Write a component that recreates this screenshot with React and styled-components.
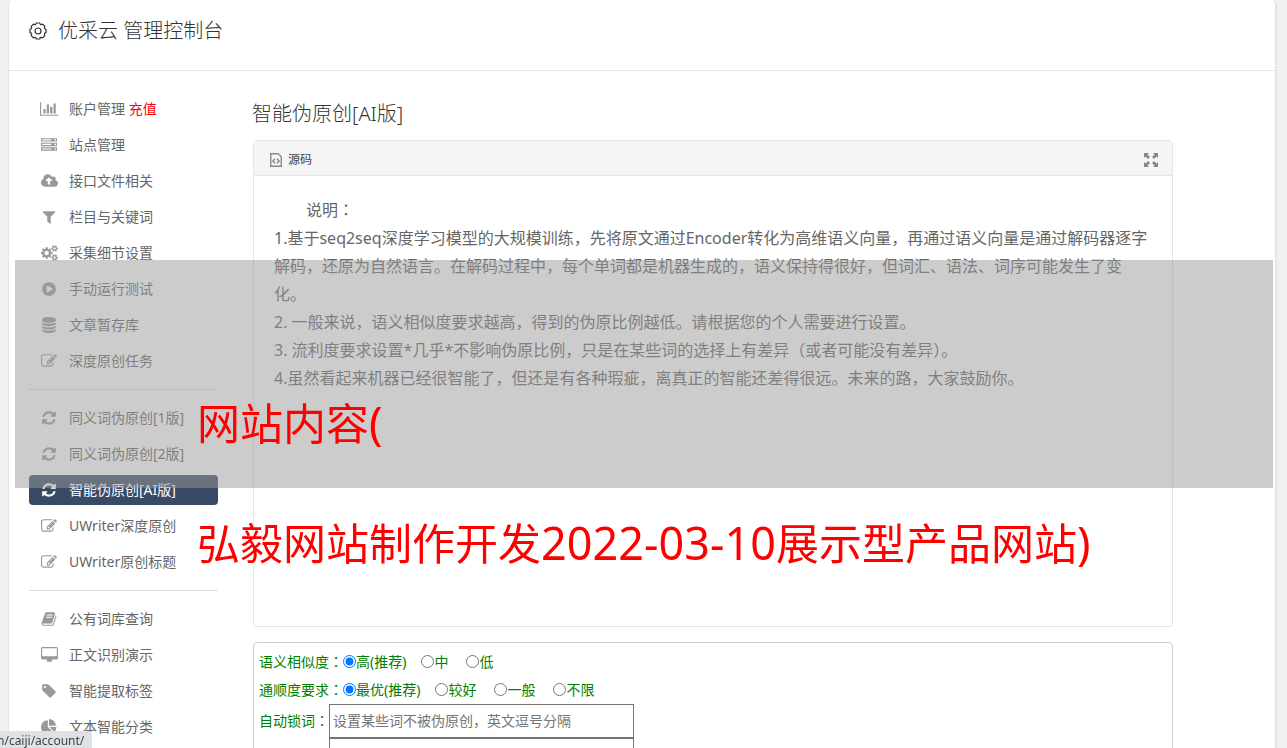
import { useState } from "react";
import styled, { createGlobalStyle, css } from "styled-components";

const icons = {
  chart: {
    width: 2048,
    path: "M640 896v512h-256v-512h256zm384-512v1024h-256v-1024h256zm1024 1152v128h-2048v-1536h128v1408h1920zm-640-896v768h-256v-768h256zm384-384v1152h-256v-1152h256z",
  },
  server: {
    width: 1792,
    path: "M128 1408h1024v-128h-1024v128zm0-512h1024v-128h-1024v128zm1568 448q0-40-28-68t-68-28-68 28-28 68 28 68 68 28 68-28 28-68zm-1568-960h1024v-128h-1024v128zm1568 448q0-40-28-68t-68-28-68 28-28 68 28 68 68 28 68-28 28-68zm0-512q0-40-28-68t-68-28-68 28-28 68 28 68 68 28 68-28 28-68zm96 832v384h-1792v-384h1792zm0-512v384h-1792v-384h1792zm0-512v384h-1792v-384h1792z",
  },
  cloud: {
    width: 1920,
    path: "M1280 864q0-14-9-23l-352-352q-9-9-23-9t-23 9l-351 351q-10 12-10 24 0 14 9 23t23 9h224v352q0 13 9.5 22.5t22.5 9.5h192q13 0 22.5-9.5t9.5-22.5v-352h224q13 0 22.5-9.5t9.5-22.5zm640 288q0 159-112.5 271.5t-271.5 112.5h-1088q-185 0-316.5-131.5t-131.5-316.5q0-130 70-240t188-165q-2-30-2-43 0-212 150-362t362-150q156 0 285.5 87t188.5 231q71-62 166-62 106 0 181 75t75 181q0 76-41 138 130 31 213.5 135.5t83.5 238.5z",
  },
  filter: {
    width: 1792,
    path: "M1595 295q17 41-14 70l-493 493v742q0 42-39 59-13 5-25 5-27 0-45-19l-256-256q-19-19-19-45v-486l-493-493q-31-29-14-70 17-39 59-39h1280q42 0 59 39z",
  },
  cogs: {
    width: 1920,
    path: "M896 896q0-106-75-181t-181-75-181 75-75 181 75 181 181 75 181-75 75-181zm768 512q0-52-38-90t-90-38-90 38-38 90q0 53 37.5 90.5t90.5 37.5 90.5-37.5 37.5-90.5zm0-1024q0-52-38-90t-90-38-90 38-38 90q0 53 37.5 90.5t90.5 37.5 90.5-37.5 37.5-90.5zm-384 421v185q0 10-7 19.5t-16 10.5l-155 24q-11 35-32 76 34 48 90 115 7 11 7 20 0 12-7 19-23 30-82.5 89.5t-78.5 59.5q-11 0-21-7l-115-90q-37 19-77 31-11 108-23 155-7 24-30 24h-186q-11 0-20-7.5t-10-17.5l-23-153q-34-10-75-31l-118 89q-7 7-20 7-11 0-21-8-144-133-144-160 0-9 7-19 10-14 41-53t47-61q-23-44-35-82l-152-24q-10-1-17-9.5t-7-19.5v-185q0-10 7-19.5t16-10.5l155-24q11-35 32-76-34-48-90-115-7-11-7-20 0-12 7-20 22-30 82-89t79-59q11 0 21 7l115 90q34-18 77-32 11-108 23-154 7-24 30-24h186q11 0 20 7.5t10 17.5l23 153q34 10 75 31l118-89q8-7 20-7 11 0 21 8 144 133 144 160 0 8-7 19-12 16-42 54t-45 60q23 48 34 82l152 23q10 2 17 10.5t7 19.5zm640 533v140q0 16-149 31-12 27-30 52 51 113 51 138 0 4-4 7-122 71-124 71-8 0-46-47t-52-68q-20 2-30 2t-30-2q-14 21-52 68t-46 47q-2 0-124-71-4-3-4-7 0-25 51-138-18-25-30-52-149-15-149-31v-140q0-16 149-31 13-29 30-52-51-113-51-138 0-4 4-7 4-2 35-20t59-34 30-16q8 0 46 46.5t52 67.5q20-2 30-2t30 2q51-71 92-112l6-2q4 0 124 70 4 3 4 7 0 25-51 138 17 23 30 52 149 15 149 31zm0-1024v140q0 16-149 31-12 27-30 52 51 113 51 138 0 4-4 7-122 71-124 71-8 0-46-47t-52-68q-20 2-30 2t-30-2q-14 21-52 68t-46 47q-2 0-124-71-4-3-4-7 0-25 51-138-18-25-30-52-149-15-149-31v-140q0-16 149-31 13-29 30-52-51-113-51-138 0-4 4-7 4-2 35-20t59-34 30-16q8 0 46 46.5t52 67.5q20-2 30-2t30 2q51-71 92-112l6-2q4 0 124 70 4 3 4 7 0 25-51 138 17 23 30 52 149 15 149 31z",
  },
  play: {
    width: 1792,
    path: "M896 128q209 0 385.5 103t279.5 279.5 103 385.5-103 385.5-279.5 279.5-385.5 103-385.5-103-279.5-279.5-103-385.5 103-385.5 279.5-279.5 385.5-103zm384 823q32-18 32-55t-32-55l-544-320q-31-19-64-1-32 19-32 56v640q0 37 32 56 16 8 32 8 17 0 32-9z",
  },
  database: {
    width: 1792,
    path: "M896 768q237 0 443-43t325-127v170q0 69-103 128t-280 93.5-385 34.5-385-34.5-280-93.5-103-128v-170q119 84 325 127t443 43zm0 768q237 0 443-43t325-127v170q0 69-103 128t-280 93.5-385 34.5-385-34.5-280-93.5-103-128v-170q119 84 325 127t443 43zm0-384q237 0 443-43t325-127v170q0 69-103 128t-280 93.5-385 34.5-385-34.5-280-93.5-103-128v-170q119 84 325 127t443 43zm0-1152q208 0 385 34.5t280 93.5 103 128v128q0 69-103 128t-280 93.5-385 34.5-385-34.5-280-93.5-103-128v-128q0-69 103-128t280-93.5 385-34.5z",
  },
  edit: {
    width: 1792,
    path: "M888 1184l116-116-152-152-116 116v56h96v96h56zm440-720q-16-16-33 1l-350 350q-17 17-1 33t33-1l350-350q17-17 1-33zm80 594v190q0 119-84.5 203.5t-203.5 84.5h-832q-119 0-203.5-84.5t-84.5-203.5v-832q0-119 84.5-203.5t203.5-84.5h832q63 0 117 25 15 7 18 23 3 17-9 29l-49 49q-14 14-32 8-23-6-45-6h-832q-66 0-113 47t-47 113v832q0 66 47 113t113 47h832q66 0 113-47t47-113v-126q0-13 9-22l64-64q15-15 35-7t20 29zm-96-738l288 288-672 672h-288v-288zm444 132l-92 92-288-288 92-92q28-28 68-28t68 28l152 152q28 28 28 68t-28 68z",
  },
  refresh: {
    width: 1792,
    path: "M1639 1056q0 5-1 7-64 268-268 434.5t-478 166.5q-146 0-282.5-55t-243.5-157l-129 129q-19 19-45 19t-45-19-19-45v-448q0-26 19-45t45-19h448q26 0 45 19t19 45-19 45l-137 137q71 66 161 102t187 36q134 0 250-65t186-179q11-17 53-117 8-23 30-23h192q13 0 22.5 9.5t9.5 22.5zm25-800v448q0 26-19 45t-45 19h-448q-26 0-45-19t-19-45 19-45l138-138q-148-137-349-137-134 0-250 65t-186 179q-11 17-53 117-8 23-30 23h-199q-13 0-22.5-9.5t-9.5-22.5v-7q65-268 270-434.5t480-166.5q146 0 284 55.5t245 156.5l130-129q19-19 45-19t45 19 19 45z",
  },
  book: {
    width: 1792,
    path: "M1703 478q40 57 18 129l-275 906q-19 64-76.5 107.5t-122.5 43.5h-923q-77 0-148.5-53.5t-99.5-131.5q-24-67-2-127 0-4 3-27t4-37q1-8-3-21.5t-3-19.5q2-11 8-21t16.5-23.5 16.5-23.5q23-38 45-91.5t30-91.5q3-10 .5-30t-.5-28q3-11 17-28t17-23q21-36 42-92t25-90q1-9-2.5-32t.5-28q4-13 22-30.5t22-22.5q19-26 42.5-84.5t27.5-96.5q1-8-3-25.5t-2-26.5q2-8 9-18t18-23 17-21q8-12 16.5-30.5t15-35 16-36 19.5-32 26.5-23.5 36-11.5 47.5 5.5l-1 3q38-9 51-9h761q74 0 114 56t18 130l-274 906q-36 119-71.5 153.5t-128.5 34.5h-869q-27 0-38 15-11 16-1 43 24 70 144 70h923q29 0 56-15.5t35-41.5l300-987q7-22 5-57 38 15 59 43zm-1064 2q-4 13 2 22.5t20 9.5h608q13 0 25.5-9.5t16.5-22.5l21-64q4-13-2-22.5t-20-9.5h-608q-13 0-25.5 9.5t-16.5 22.5zm-83 256q-4 13 2 22.5t20 9.5h608q13 0 25.5-9.5t16.5-22.5l21-64q4-13-2-22.5t-20-9.5h-608q-13 0-25.5 9.5t-16.5 22.5z",
  },
  desktop: {
    width: 1920,
    path: "M1792 992v-832q0-13-9.5-22.5t-22.5-9.5h-1600q-13 0-22.5 9.5t-9.5 22.5v832q0 13 9.5 22.5t22.5 9.5h1600q13 0 22.5-9.5t9.5-22.5zm128-832v1088q0 66-47 113t-113 47h-544q0 37 16 77.5t32 71 16 43.5q0 26-19 45t-45 19h-512q-26 0-45-19t-19-45q0-14 16-44t32-70 16-78h-544q-66 0-113-47t-47-113v-1088q0-66 47-113t113-47h1600q66 0 113 47t47 113z",
  },
  tag: {
    width: 1792,
    path: "M576 448q0-53-37.5-90.5t-90.5-37.5-90.5 37.5-37.5 90.5 37.5 90.5 90.5 37.5 90.5-37.5 37.5-90.5zm1067 576q0 53-37 90l-491 492q-39 37-91 37-53 0-90-37l-715-716q-38-37-64.5-101t-26.5-117v-416q0-52 38-90t90-38h416q53 0 117 26.5t102 64.5l715 714q37 39 37 91z",
  },
  pie: {
    width: 1792,
    path: "M768 890l546 546q-106 108-247.5 168t-298.5 60q-209 0-385.5-103t-279.5-279.5-103-385.5 103-385.5 279.5-279.5 385.5-103v762zm187 6h773q0 157-60 298.5t-168 247.5zm709-128h-768v-768q209 0 385.5 103t279.5 279.5 103 385.5z",
  },
};

const menuGroups = [
  [
    { icon: "chart", label: "账户管理", extra: "充值" },
    { icon: "server", label: "站点管理" },
    { icon: "cloud", label: "接口文件相关" },
    { icon: "filter", label: "栏目与关键词" },
    { icon: "cogs", label: "采集细节设置" },
    { icon: "play", label: "手动运行测试" },
    { icon: "database", label: "文章暂存库" },
    { icon: "edit", label: "深度原创任务" },
  ],
  [
    { icon: "refresh", label: "同义词伪原创[1版]" },
    { icon: "refresh", label: "同义词伪原创[2版]" },
    { icon: "refresh", label: "智能伪原创[AI版]", active: true },
    { icon: "edit", label: "UWriter深度原创" },
    { icon: "edit", label: "UWriter原创标题" },
  ],
  [
    { icon: "book", label: "公有词库查询" },
    { icon: "desktop", label: "正文识别演示" },
    { icon: "tag", label: "智能提取标签" },
    { icon: "pie", label: "文本智能分类" },
  ],
];

const similarity = ["高(推荐)", "中", "低"];
const fluency = ["最优(推荐)", "较好", "一般", "不限"];

function MenuIcon({ name }) {
  const { width, path } = icons[name];
  return (
    <svg
      width={Math.round((width * 16) / 1792)}
      height="16"
      viewBox={`0 0 ${width} 1792`}
      fill="currentColor"
      aria-hidden="true"
    >
      <path d={path} />
    </svg>
  );
}

function gearPoint(angle, radius) {
  const rad = (angle * Math.PI) / 180;
  return `${(9 + radius * Math.sin(rad)).toFixed(2)} ${(9 - radius * Math.cos(rad)).toFixed(2)}`;
}

// eight wide, shallow teeth round the rim
const gearPath =
  [0, 45, 90, 135, 180, 225, 270, 315]
    .map(
      (angle, index) =>
        `${index === 0 ? "M" : "L"}${gearPoint(angle - 12, 8.2)}L${gearPoint(angle + 12, 8.2)}Q${gearPoint(angle + 22.5, 5.8)} ${gearPoint(angle + 33, 8.2)}`
    )
    .join("") + "Z";

function GearIcon() {
  return (
    <svg width="18" height="18" viewBox="0 0 18 18" fill="none" stroke="#333" aria-hidden="true">
      <path d={gearPath} strokeWidth="1.2" strokeLinejoin="round" />
      <circle cx="9" cy="9" r="3" strokeWidth="1.2" />
    </svg>
  );
}

function SourceIcon() {
  return (
    <svg width="12" height="14" viewBox="0 0 12 14" fill="none" stroke="#888" aria-hidden="true">
      <path d="M.75.75h7.5l3 3v9.5H.75z" strokeWidth="1.4" />
      <path d="M5 5.8 2.9 8 5 10.2M7 5.8 9.1 8 7 10.2" strokeWidth="1.4" />
    </svg>
  );
}

function ExpandIcon() {
  return (
    <svg width="14" height="14" viewBox="0 0 14 14" fill="#888" aria-hidden="true">
      <path d="M0 0h5L3.5 1.500 6 4 4 6 1.500 3.500 0 5z" />
      <path d="M14 0v5l-1.500-1.500L10 6 8 4l2.500-2.500L9 0z" />
      <path d="M0 14V9l1.500 1.500L4 8l2 2-2.500 2.500L5 14z" />
      <path d="M14 14H9l1.500-1.500L8 10l2-2 2.500 2.500L14 9z" />
    </svg>
  );
}

function RadioRow({ title, name, options }) {
  const [selected, setSelected] = useState(options[0]);

  return (
    <OptionRow>
      <legend>
        {title}
        <Colon>：</Colon>
      </legend>
      {options.map((option) => (
        <RadioLabel key={option}>
          <input
            type="radio"
            name={name}
            checked={selected === option}
            onChange={() => setSelected(option)}
          />
          {option}
        </RadioLabel>
      ))}
    </OptionRow>
  );
}

export default function App() {
  return (
    <>
      <GlobalStyle />
      <Page>
        <Header>
          <GearIcon />
          <h1>优采云 管理控制台</h1>
        </Header>
        <Body>
          <Sidebar>
            {menuGroups.map((group, index) => (
              <MenuGroup key={index}>
                {group.map(({ icon, label, extra, active }) => (
                  <li key={label}>
                    <MenuLink href="#" $active={active}>
                      <IconSlot>
                        <MenuIcon name={icon} />
                      </IconSlot>
                      <span>
                        {label} {extra && <em>{extra}</em>}
                      </span>
                    </MenuLink>
                  </li>
                ))}
              </MenuGroup>
            ))}
          </Sidebar>
          <Content>
            <h2>智能伪原创[AI版]</h2>
            <Editor>
              <Toolbar>
                <ToolButton>
                  <SourceIcon />
                  源码
                </ToolButton>
                <ToolButton aria-label="全屏">
                  <ExpandIcon />
                </ToolButton>
              </Toolbar>
              <Article>
                <p className="lead">
                  说明<Colon>：</Colon>
                </p>
                <p>
                  1.基于seq2seq深度学习模型的大规模训练，先将原文通过Encoder转化为高维语义向量，再通过语义向量是通过解码器逐字解码，还原为自然语言。在解码过程中，每个单词都是机器生成的，语义保持得很好，但词汇、语法、词序可能发生了变化。
                </p>
                <p>2. 一般来说，语义相似度要求越高，得到的伪原比例越低。请根据您的个人需要进行设置。</p>
                <p>3. 流利度要求设置*几乎*不影响伪原比例，只是在某些词的选择上有差异（或者可能没有差异）。</p>
                <p>4.虽然看起来机器已经很智能了，但还是有各种瑕疵，离真正的智能还差得很远。未来的路，大家鼓励你。</p>
              </Article>
            </Editor>
            <Settings>
              <RadioRow title="语义相似度" name="similarity" options={similarity} />
              <RadioRow title="通顺度要求" name="fluency" options={fluency} />
              <FieldRow>
                <label htmlFor="lock-words">
                  自动锁词<Colon>：</Colon>
                </label>
                <Fields>
                  <input id="lock-words" placeholder="设置某些词不被伪原创，英文逗号分隔" />
                  <input aria-label="自定义锁词" />
                </Fields>
              </FieldRow>
            </Settings>
          </Content>
        </Body>
      </Page>
      <Band />
      <Caption>
        <span>
          网站内容<Latin>(</Latin>
        </span>
        <span>
          弘毅网站制作开发<Latin>2022-03-10</Latin>展示型产品网站<Latin>)</Latin>
        </span>
      </Caption>
      <StatusBar>n/caiji/account/</StatusBar>
    </>
  );
}

const GlobalStyle = createGlobalStyle`
  * {
    box-sizing: border-box;
  }

  body {
    margin: 0;
    height: 100vh;
    overflow: hidden;
    background-color: #f1f1f1;
    color: #666;
    font-family: "Noto Sans", "Noto Sans CJK SC", sans-serif;
    font-size: 14px;
  }

  h1,
  h2,
  p,
  ul {
    margin: 0;
    padding: 0;
    font-weight: 400;
  }
`;

const Colon = styled.span`
  font-family: "Noto Sans CJK JP", sans-serif;
  line-height: 1;
`;

const Page = styled.div`
  min-height: 100vh;
  margin: 0 10px 0 8px;
  background-color: #fff;
  border: 1px solid #e5e5e5;
  border-top: 0;
  border-right-width: 2px;
  border-radius: 5px 5px 0 0;
`;

const Header = styled.header`
  display: flex;
  align-items: center;
  gap: 11px;
  height: 71px;
  padding: 0 20px 9px;
  border-bottom: 1px solid #e5e5e5;
  color: #333;

  h1 {
    font-size: 20px;
    font-weight: 300;
    line-height: 30px;
  }
`;

const Body = styled.div`
  display: flex;
  gap: 34px;
  padding: 23px 102px 0 20px;
`;

const Sidebar = styled.nav`
  flex: 0 0 189px;
`;

const MenuGroup = styled.ul`
  display: flex;
  flex-direction: column;
  gap: 6px;
  list-style: none;

  & + & {
    margin-top: 13px;
    padding-top: 13px;
    border-top: 1px solid #ddd;
  }
`;

const MenuLink = styled.a`
  display: flex;
  align-items: center;
  gap: 10px;
  height: 30px;
  padding: 0 10px;
  border-radius: 4px;
  color: #666;
  line-height: 20px;
  white-space: nowrap;
  text-decoration: none;

  em {
    color: #f00;
    font-style: normal;
  }

  svg {
    color: #999;
  }

  ${({ $active }) =>
    $active &&
    css`
      background-color: #3a4a66;
      color: #fff;

      svg {
        color: #fff;
      }
    `}
`;

const IconSlot = styled.span`
  display: flex;
  justify-content: center;
  width: 20px;
`;

const Content = styled.main`
  flex: 1;
  min-width: 0;

  h2 {
    margin-bottom: 11px;
    padding-top: 5px;
    color: #333;
    font-size: 20px;
    font-weight: 300;
    line-height: 30px;
  }
`;

const Editor = styled.section`
  border: 1px solid #e5e5e5;
  border-radius: 4px;
  margin: 0 0 15px 1px;
`;

const Toolbar = styled.div`
  display: flex;
  justify-content: space-between;
  align-items: center;
  height: 35px;
  padding: 3px 14px 0 16px;
  background-color: #f5f5f5;
  border-bottom: 1px solid #e5e5e5;
`;

const ToolButton = styled.button`
  display: flex;
  align-items: center;
  gap: 6px;
  padding: 0;
  border: 0;
  background: none;
  color: #444;
  font-family: inherit;
  font-size: 12px;
  line-height: 20px;
`;

const Article = styled.div`
  min-height: 450px;
  padding: 20px;
  font-size: 16px;
  line-height: 28px;

  .lead {
    text-indent: 2em;
  }
`;

const Settings = styled.form`
  margin-left: 1px;
  padding: 4px 5px 5px;
  border: 1px solid #ccc;
  border-radius: 4px;
  color: #008000;
`;

const OptionRow = styled.fieldset`
  display: flex;
  align-items: center;
  height: 28px;
  margin: 0;
  padding: 0;
  border: 0;

  legend {
    float: left;
    padding: 0;
  }
`;

const RadioLabel = styled.label`
  display: flex;
  align-items: center;
  margin-right: 18px;

  &:first-of-type {
    margin-right: 15px;
  }

  input {
    width: 13px;
    height: 13px;
    margin: 0;
  }
`;

const FieldRow = styled.div`
  display: flex;
  align-items: flex-start;
  margin-top: 1px;
  line-height: 34px;
`;

const Fields = styled.div`
  display: flex;
  flex-direction: column;

  input {
    width: 305px;
    height: 34px;
    padding: 1px 3px 3px;
    border: 1px solid #767676;
    font-family: inherit;
    font-size: 14px;
  }
`;

/* translucent strip and red caption laid over the whole page */
const Band = styled.div`
  position: fixed;
  top: 260px;
  left: 15px;
  right: 14px;
  height: 228px;
  background-color: rgba(153, 153, 153, 0.5);
  pointer-events: none;
`;

const Caption = styled.div`
  position: fixed;
  top: 364px;
  left: 197px;
  display: flex;
  flex-direction: column;
  color: #f00;
  font-size: 43px;
  line-height: 120px;
  white-space: nowrap;
  pointer-events: none;
`;

const Latin = styled.span`
  font-size: 45px;
  line-height: 1;
`;

const StatusBar = styled.div`
  position: fixed;
  left: 0;
  bottom: 0;
  height: 17px;
  padding: 0 8px 0 0;
  border-top-right-radius: 4px;
  background-color: #dee1e6;
  color: #444;
  font-size: 12px;
  line-height: 20px;
  text-indent: -3px;
  overflow: hidden;
`;
